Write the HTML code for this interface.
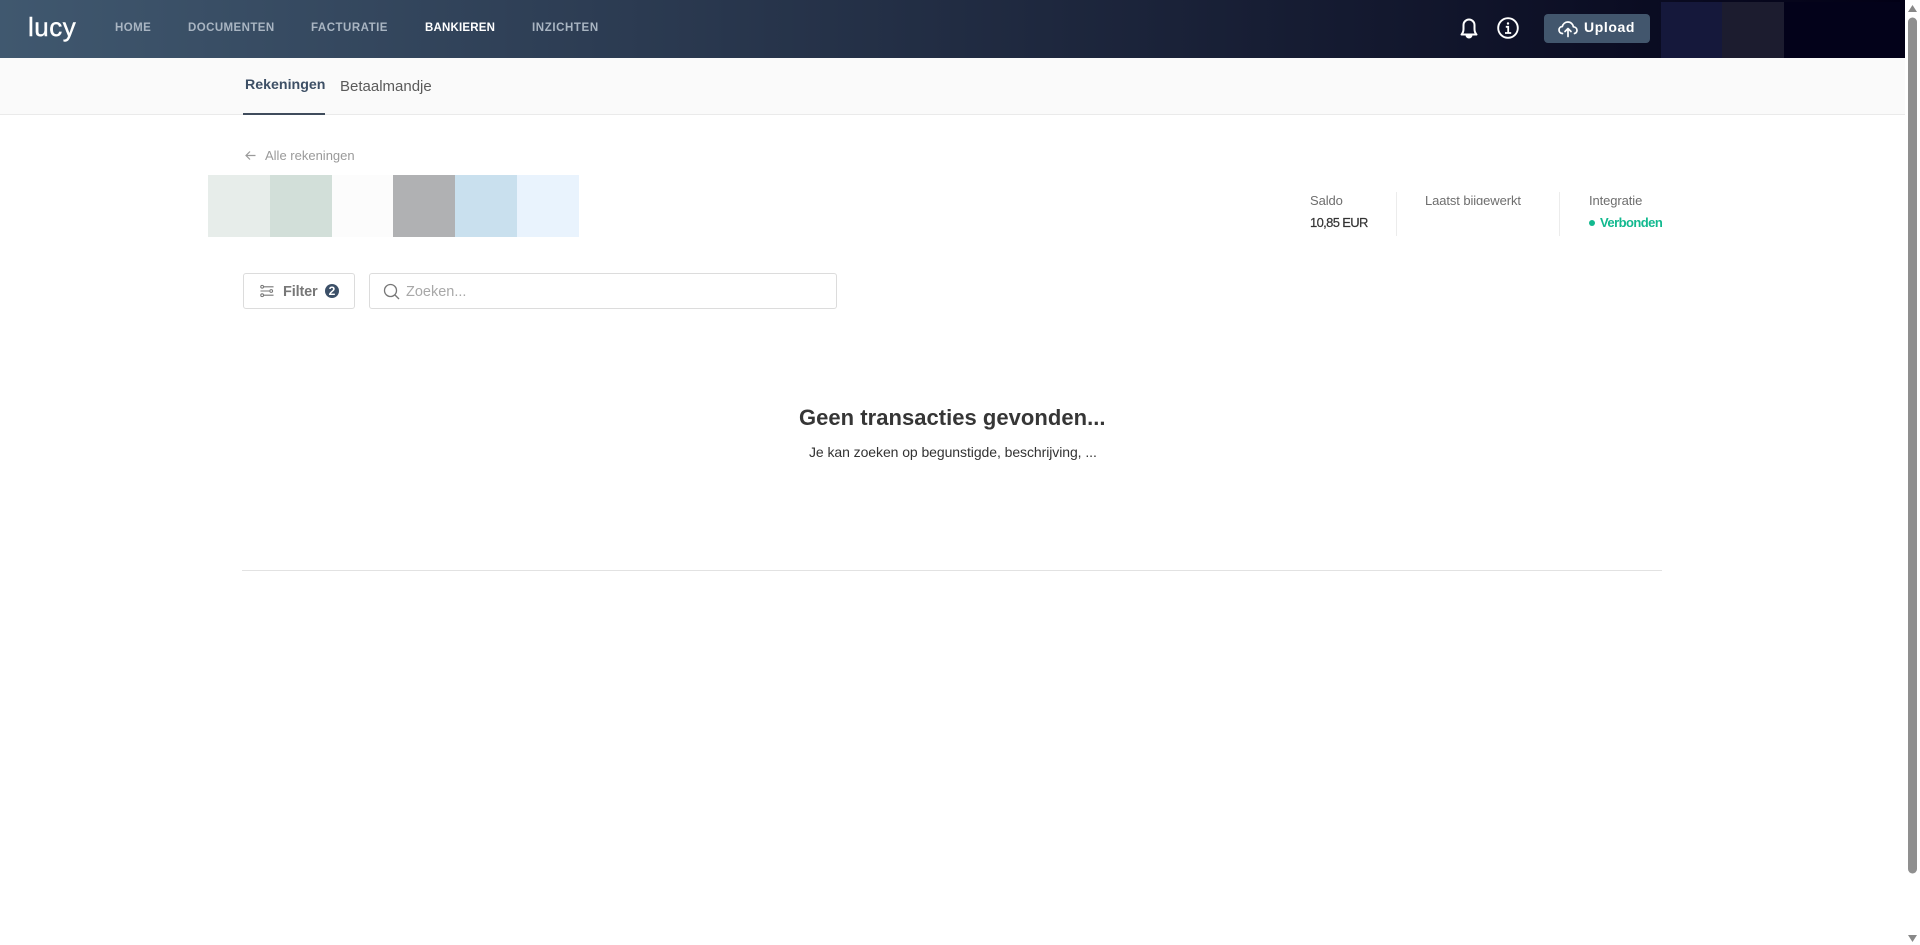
<!DOCTYPE html>
<html lang="nl">
<head>
<meta charset="utf-8">
<title>Lucy - Bankieren</title>
<style>
html,body{margin:0;padding:0;width:1920px;height:945px;overflow:hidden;background:#fff;font-family:"Liberation Sans",sans-serif;}
*{box-sizing:border-box;}
.a{position:absolute;white-space:nowrap;line-height:1;}
header{position:absolute;left:0;top:0;width:1905px;height:58px;background:linear-gradient(90deg,#40586f 0%,#020016 100%);}
.nav{font-size:11.5px;font-weight:700;color:#a9b5c2;letter-spacing:.42px;top:23px;}
.tabs{position:absolute;left:0;top:58px;width:1905px;height:57px;background:#fafafa;border-bottom:1px solid #eaeaea;}
.sw{position:absolute;top:175px;height:62px;width:62px;}
.lbl{font-size:13px;color:#6e6e6e;letter-spacing:-.1px;}
.sep{position:absolute;top:192px;height:44px;width:1px;background:#ececec;}
.box{position:absolute;top:273px;height:36px;border:1px solid #dcdcdc;border-radius:3px;background:#fff;}
</style>
</head>
<body>
<header></header>
<div class="a" style="left:28px;top:14px;font-size:26px;color:#fff;letter-spacing:.5px;-webkit-text-stroke:.4px #fff;">lucy</div>
<div class="a nav" style="left:115px;">HOME</div>
<div class="a nav" style="left:188px;">DOCUMENTEN</div>
<div class="a nav" style="left:311px;letter-spacing:.5px;">FACTURATIE</div>
<div class="a nav" style="left:425px;color:#fff;letter-spacing:.2px;">BANKIEREN</div>
<div class="a nav" style="left:532px;letter-spacing:.6px;">INZICHTEN</div>

<svg class="a" style="left:1458px;top:17px;" width="22" height="23" viewBox="0 0 22 23" fill="none" stroke="#fff" stroke-width="2" stroke-linejoin="round"><path d="M3.500 17.500c1.400-1.500 2-3 2-5.500V8a5.500 5.500 0 0 1 11 0v4c0 2.500.6 4 2 5.500z"/><path d="M8.500 18a2.500 2.500 0 0 0 5 0" fill="#fff"/></svg>
<svg class="a" style="left:1497px;top:17px;" width="22" height="22" viewBox="0 0 22 22" fill="none" stroke="#fff" stroke-width="1.900"><circle cx="11" cy="11" r="9.800"/><circle cx="11" cy="6.500" r="1.200" fill="#fff" stroke="none"/><path d="M8.800 9.800H11.200V15.600M8 16H14.200" stroke-width="1.800"/></svg>

<div class="a" style="left:1544px;top:14px;width:106px;height:29px;background:#42566d;border-radius:4px;"></div>
<svg class="a" style="left:1558px;top:20px;" width="20" height="18" viewBox="0 0 20 18" fill="none" stroke="#fff" stroke-width="1.700" stroke-linecap="round" stroke-linejoin="round"><path d="M4.500 13.500C2.300 13.300 1 11.800 1 10c0-1.900 1.400-3.400 3.300-3.500C5 3.800 7.200 2 9.800 2c2.900 0 5.200 2.100 5.500 4.800 2 .2 3.700 1.400 3.700 3.500 0 1.600-1 2.800-2.500 3.200"/><path d="M10 16.500V9M7 11.500 10 8.500 13 11.500"/></svg>
<div class="a" style="left:1584px;top:20px;font-size:14px;font-weight:700;color:#fff;letter-spacing:.6px;">Upload</div>

<div class="a" style="left:1661px;top:2px;width:61px;height:59px;background:#15183b;"></div>
<div class="a" style="left:1722px;top:2px;width:62px;height:59px;background:#1c1c2f;"></div>
<div class="a" style="left:1784px;top:2px;width:116px;height:59px;background:#03021a;"></div>

<div class="tabs"></div>
<div class="a" style="left:245px;top:78px;font-size:14.200px;font-weight:700;color:#3d4f65;">Rekeningen</div>
<div class="a" style="left:243px;top:113px;width:82px;height:2px;background:#3f4c5c;"></div>
<div class="a" style="left:340px;top:79px;font-size:15px;color:#5a5a5a;">Betaalmandje</div>

<svg class="a" style="left:245px;top:150px;" width="11" height="11" viewBox="0 0 11 11" fill="none" stroke="#9a9a9a" stroke-width="1.200"><path d="M10.500 5.500H1M5 1.500 1 5.500 5 9.500"/></svg>
<div class="a" style="left:265px;top:149px;font-size:13px;color:#9a9a9a;">Alle rekeningen</div>

<div class="sw" style="left:208px;background:#e7edea;"></div>
<div class="sw" style="left:270px;background:#d2dfd9;"></div>
<div class="sw" style="left:332px;background:#fcfcfc;"></div>
<div class="sw" style="left:393px;background:#b0b1b3;"></div>
<div class="sw" style="left:455px;background:#c9e0ee;"></div>
<div class="sw" style="left:517px;background:#e9f3fd;"></div>

<div class="a lbl" style="left:1310px;top:194px;">Saldo</div>
<div class="a" style="left:1310px;top:216px;font-size:13px;color:#333;letter-spacing:-.65px;-webkit-text-stroke:.2px #333;">10,85 EUR</div>
<div class="sep" style="left:1396px;"></div>
<div class="a lbl" style="left:1425px;top:194px;height:11px;overflow:hidden;">Laatst bijgewerkt</div>
<div class="sep" style="left:1559px;"></div>
<div class="a lbl" style="left:1589px;top:194px;">Integratie</div>
<div class="a" style="left:1589px;top:220px;width:6px;height:6px;border-radius:50%;background:#12b98f;"></div>
<div class="a" style="left:1600px;top:216px;font-size:13px;font-weight:700;color:#12b98f;letter-spacing:-.55px;">Verbonden</div>

<div class="box" style="left:243px;width:112px;"></div>
<svg class="a" style="left:260px;top:284px;" width="14" height="14" viewBox="0 0 15 14" fill="none" stroke="#777" stroke-width="1.100"><path d="M4 2.500H14.500M.5 7H10M4 11.500H14.500"/><circle cx="2.300" cy="2.500" r="1.500"/><circle cx="12" cy="7" r="1.500"/><circle cx="2.300" cy="11.500" r="1.500"/></svg>
<div class="a" style="left:283px;top:285px;font-size:14.500px;font-weight:700;color:#777;letter-spacing:-.15px;">Filter</div>
<div class="a" style="left:325px;top:284px;width:14px;height:14px;border-radius:50%;background:#3c5068;color:#fff;font-size:12px;font-weight:700;text-align:center;line-height:14px;">2</div>

<div class="box" style="left:369px;width:468px;"></div>
<svg class="a" style="left:383px;top:283px;" width="17" height="17" viewBox="0 0 17 17" fill="none" stroke="#777" stroke-width="1.300"><circle cx="7.500" cy="7.500" r="6"/><path d="M12 12 16 16"/></svg>
<div class="a" style="left:406px;top:285px;font-size:14.500px;color:#a8a8a8;">Zoeken...</div>

<div class="a" style="left:799px;top:407px;font-size:22px;font-weight:700;color:#363636;letter-spacing:.03px;">Geen transacties gevonden...</div>
<div class="a" style="left:809px;top:445px;font-size:14px;color:#333;letter-spacing:-.07px;">Je kan zoeken op begunstigde, beschrijving, ...</div>

<div class="a" style="left:242px;top:570px;width:1420px;height:1px;background:#e2e2e2;"></div>

<svg class="a" style="left:1905px;top:0;" width="15" height="945" viewBox="0 0 15 945">
<path d="M3 12 7.500 5 12 12z" fill="#888"/>
<path d="M3 22a4.500 4.500 0 0 1 9 0V869a4.500 4.500 0 0 1-9 0z" fill="#8f8f8f"/>
<path d="M3 935 7.500 942 12 935z" fill="#888"/>
</svg>
</body>
</html>
